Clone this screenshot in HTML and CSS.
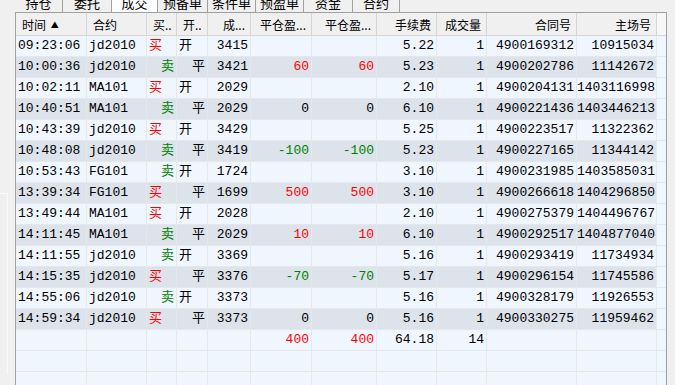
FILE: index.html
```html
<!DOCTYPE html>
<html>
<head>
    <title>成交</title>
    <link rel="stylesheet" href="styles.css">
</head>
<body>
    <div class="side">
        <div class="side-panel"></div>
    </div>

    <div class="main">
        <div class="tabs">
            <span class="tab t1">持仓</span>
            <span class="tab t2">委托</span>
            <span class="tab t3 active">成交</span>
            <span class="tab t4">预备单</span>
            <span class="tab t5">条件单</span>
            <span class="tab t6">预盈单</span>
            <span class="tab t7">资金</span>
            <span class="tab t8">合约</span>
        </div>

        <div class="frame">
            <table class="grid">
                <thead>
                    <tr>
                        <th class="c-time left">时间 <span class="sort">▲</span></th>
                        <th class="c-code left">合约</th>
                        <th class="c-side left">买..</th>
                        <th class="c-open left">开..</th>
                        <th class="c-price">成...</th>
                        <th class="c-pnl1">平仓盈...</th>
                        <th class="c-pnl2">平仓盈...</th>
                        <th class="c-fee">手续费</th>
                        <th class="c-qty">成交量</th>
                        <th class="c-order">合同号</th>
                        <th class="c-ex">主场号</th>
                        <th class="c-fill"></th>
                    </tr>
                </thead>
                <tbody id="rows"></tbody>
            </table>
        </div>
    </div>

    <script>
        var trades = [
            ["09:23:06", "jd2010", "买", "开", "3415", "", "", "5.22", "1", "4900169312", "10915034"],
            ["10:00:36", "jd2010", "卖", "平", "3421", "60", "60", "5.23", "1", "4900202786", "11142672"],
            ["10:02:11", "MA101", "买", "开", "2029", "", "", "2.10", "1", "4900204131", "1403116998"],
            ["10:40:51", "MA101", "卖", "平", "2029", "0", "0", "6.10", "1", "4900221436", "1403446213"],
            ["10:43:39", "jd2010", "买", "开", "3429", "", "", "5.25", "1", "4900223517", "11322362"],
            ["10:48:08", "jd2010", "卖", "平", "3419", "-100", "-100", "5.23", "1", "4900227165", "11344142"],
            ["10:53:43", "FG101", "卖", "开", "1724", "", "", "3.10", "1", "4900231985", "1403585031"],
            ["13:39:34", "FG101", "买", "平", "1699", "500", "500", "3.10", "1", "4900266618", "1404296850"],
            ["13:49:44", "MA101", "买", "开", "2028", "", "", "2.10", "1", "4900275379", "1404496767"],
            ["14:11:45", "MA101", "卖", "平", "2029", "10", "10", "6.10", "1", "4900292517", "1404877040"],
            ["14:11:55", "jd2010", "卖", "开", "3369", "", "", "5.16", "1", "4900293419", "11734934"],
            ["14:15:35", "jd2010", "买", "平", "3376", "-70", "-70", "5.17", "1", "4900296154", "11745586"],
            ["14:55:06", "jd2010", "卖", "开", "3373", "", "", "5.16", "1", "4900328179", "11926553"],
            ["14:59:34", "jd2010", "买", "平", "3373", "0", "0", "5.16", "1", "4900330275", "11959462"]
        ];

        function pnlClass(v) {
            if (v === "" || v === "0") return "";
            return v.charAt(0) === "-" ? "green" : "red";
        }

        function cell(text, cls) {
            return '<td class="' + (cls || "") + '">' + text + '</td>';
        }

        var html = "";
        for (var i = 0; i < trades.length; i++) {
            var t = trades[i];
            var buy = t[2] === "买";
            var open = t[3] === "开";
            html += '<tr class="' + (i % 2 ? "dark" : "") + '">';
            html += cell(t[0], "left");
            html += cell(t[1], "left");
            html += cell(t[2], buy ? "left red" : "green");
            html += cell(t[3], open ? "left" : "");
            html += cell(t[4]);
            html += cell(t[5], pnlClass(t[5]));
            html += cell(t[6], pnlClass(t[6]));
            html += cell(t[7]);
            html += cell(t[8]);
            html += cell(t[9]);
            html += cell(t[10], "ex");
            html += cell("", "fill");
            html += '</tr>';
        }

        // totals row
        html += '<tr>' + cell("") + cell("") + cell("") + cell("") + cell("") +
            cell("400", "red") + cell("400", "red") + cell("64.18") + cell("14") +
            cell("") + cell("", "ex") + cell("", "fill") + '</tr>';

        // empty rows
        for (var j = 0; j < 2; j++) {
            html += '<tr>';
            for (var k = 0; k < 11; k++) html += cell("");
            html += cell("", "fill") + '</tr>';
        }

        document.getElementById("rows").innerHTML = html;
    </script>
</body>
</html>
```

FILE: styles.css
```css
html, body {
    margin: 0;
    padding: 0;
    height: 100%;
    overflow: hidden;
}

body {
    background-color: #f0f0f0;
    font-family: "Noto Sans CJK SC", sans-serif;
    display: flex;
}

.side {
    width: 15px;
    flex: none;
}

.side-panel {
    margin-top: 193px;
    width: 7px;
    height: 180px;
    border-top: 1px solid #fafafa;
    border-right: 1px solid #fafafa;
}

.main {
    flex: 1;
    display: flex;
    flex-direction: column;
    min-height: 0;
}

/* tab strip, top half is cut off */
.tabs {
    display: flex;
    flex: none;
    height: 12px;
    overflow: hidden;
}

.tab {
    box-sizing: border-box;
    height: 18px;
    margin-top: -6px;
    line-height: 18px;
    font-size: 13px;
    text-align: center;
    color: #000;
    border-right: 1px solid #a0a0a0;
}

.tab.active {
    background-color: #fff;
}

.t1 { width: 48px; }
.t2 { width: 49px; }
.t3 { width: 46px; }
.t4 { width: 50px; }
.t5 { width: 48px; }
.t6 { width: 48px; }
.t7 { width: 49px; }
.t8 { width: 47px; }

.frame {
    flex: 1;
    min-height: 0;
    overflow: hidden;
    width: 650px;
    border: 1px solid #a0a0a0;
    border-bottom: none;
    background-color: #f0f6fe;
}

.grid {
    border-collapse: separate;
    border-spacing: 0;
    table-layout: fixed;
    width: 650px;
}

.grid th {
    box-sizing: border-box;
    height: 23px;
    padding: 0 5px 0 6px;
    font-size: 12px;
    font-weight: normal;
    text-align: right;
    white-space: nowrap;
    overflow: hidden;
    background-color: #f0f0f0;
    border-right: 1px solid #d5d5d5;
    border-bottom: 1px solid #d5d5d5;
}

.grid th.left {
    text-align: left;
}

.grid th.c-fill {
    background-color: #f7f7f7;
    border-right: none;
}

.sort {
    font-size: 8px;
    vertical-align: 2px;
    margin-left: 2px;
}

.c-time { width: 71px; }
.c-code { width: 60px; }
.c-side { width: 30px; }
.c-open { width: 31px; }
.c-price { width: 43px; }
.c-pnl1 { width: 61px; }
.c-pnl2 { width: 65px; }
.c-fee { width: 60px; }
.c-qty { width: 50px; }
.c-order { width: 90px; }
.c-ex { width: 80px; }
.c-fill { width: 9px; }

.grid td {
    box-sizing: border-box;
    height: 21px;
    padding: 0 2px 0 2px;
    font-family: "Liberation Mono", "Noto Sans CJK SC", monospace;
    font-size: 13px;
    line-height: 20px;
    text-align: right;
    white-space: nowrap;
    color: #000;
    border-right: 1px solid #e4e8ed;
    border-bottom: 1px solid #e4e8ed;
}

.grid td.left {
    text-align: left;
}

.grid td.ex {
    padding-left: 0;
}

.grid tr.dark td {
    background-color: #dde3eb;
}

.grid tr.dark td.fill,
.grid td.fill {
    background-color: #f0f6fe;
    border-right: none;
}

.grid td.red {
    color: #ff0000;
}

.grid td.green {
    color: #008000;
}
```
